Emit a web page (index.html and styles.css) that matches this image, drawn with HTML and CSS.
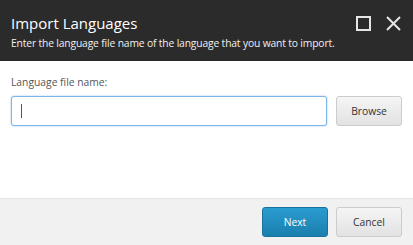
FILE: index.html
```html
<!DOCTYPE html>
<html lang="en">
<head>
    <meta charset="UTF-8">
    <title>Import Languages</title>
    <link rel="stylesheet" href="styles.css">
</head>
<body>
    <div class="dialog">
        <div class="dialog-header">
            <div class="title-row">
                <h1 class="dialog-title">Import Languages</h1>
                <div class="header-actions">
                    <button class="icon-button" title="Maximize">
                        <svg width="15" height="15" viewBox="0 0 15 15"><rect x="1" y="1" width="13" height="13" fill="none" stroke="#e6e6e6" stroke-width="2"/></svg>
                    </button>
                    <button class="icon-button" title="Close">
                        <svg width="15" height="15" viewBox="0 0 15 15"><path d="M1 1 L14 14 M14 1 L1 14" stroke="#e6e6e6" stroke-width="2"/></svg>
                    </button>
                </div>
            </div>
            <p class="dialog-subtitle">Enter the language file name of the language that you want to import.</p>
        </div>

        <div class="dialog-body">
            <label class="field-label" for="file-name">Language file name:</label>
            <div class="field-row">
                <div class="input-wrap">
                    <input class="text-input" id="file-name" type="text">
                    <span class="caret"></span>
                </div>
                <button class="btn">Browse</button>
            </div>
        </div>

        <div class="dialog-footer">
            <button class="btn btn-primary">Next</button>
            <button class="btn">Cancel</button>
        </div>
    </div>
</body>
</html>
```

FILE: styles.css
```css
* {
    margin: 0;
    padding: 0;
    box-sizing: border-box;
}

body {
    font-family: 'Open Sans', 'Noto Sans', sans-serif;
    background: #ffffff;
    width: 413px;
    height: 245px;
    overflow: hidden;
}

.dialog {
    display: flex;
    flex-direction: column;
    height: 245px;
}

.dialog-header {
    background: #2b2b2b;
    color: #ffffff;
    height: 61px;
    padding: 13px 11px 0 11px;
}

.title-row {
    display: flex;
    justify-content: space-between;
    align-items: center;
}

.dialog-title {
    font-size: 15px;
    font-weight: 400;
    line-height: 20px;
}

.dialog-subtitle {
    font-size: 10.3px;
    letter-spacing: -0.15px;
    line-height: 16px;
    color: #f0f0f0;
    margin-top: 2px;
}

.header-actions {
    display: flex;
    gap: 15px;
    padding-right: 1px;
}

.icon-button {
    background: none;
    border: none;
    width: 15px;
    height: 15px;
    cursor: pointer;
}

.icon-button svg {
    display: block;
}

.dialog-body {
    flex: 1;
    padding: 14px 11px 0 11px;
}

.field-label {
    display: block;
    font-size: 10.3px;
    color: #555555;
    line-height: 14px;
    margin-bottom: 7px;
}

.field-row {
    display: flex;
    gap: 9px;
}

.input-wrap {
    flex: 1;
    position: relative;
}

.text-input {
    width: 100%;
    height: 30px;
    border: 1px solid #7fb4e6;
    border-radius: 3px;
    box-shadow: 0 0 2px rgba(82, 155, 230, 0.6);
    padding: 0 9px;
    font-family: inherit;
    font-size: 12px;
    outline: none;
}

.caret {
    position: absolute;
    left: 10px;
    top: 8px;
    width: 1px;
    height: 14px;
    background: #555555;
}

.btn {
    width: 66px;
    height: 30px;
    border: 1px solid #cccccc;
    border-radius: 3px;
    background: linear-gradient(#f5f5f5, #e2e2e2);
    font-family: inherit;
    font-size: 10.3px;
    color: #333333;
    cursor: pointer;
}

.btn-primary {
    background: linear-gradient(#2a9cd0, #1a7fad);
    border-color: #17729c;
    color: #ffffff;
}

.dialog-footer {
    background: #f1f1f1;
    border-top: 1px solid #e4e4e4;
    height: 47px;
    padding: 8px 11px 0 11px;
    display: flex;
    justify-content: flex-end;
    align-items: flex-start;
    gap: 8px;
}
```
